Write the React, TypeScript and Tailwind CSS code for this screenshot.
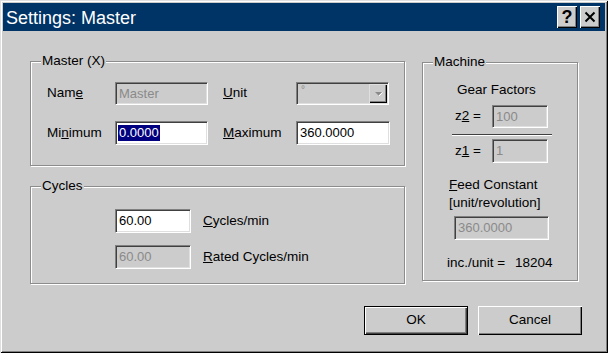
import React from "react";

const font = { fontFamily: '"Liberation Sans", Arial, sans-serif' };

function Field({
  className,
  value,
  disabled,
  selected,
}: {
  className: string;
  value: string;
  disabled?: boolean;
  selected?: boolean;
}) {
  return (
    <div
      className={
        "flex items-center border border-t-[#808080] border-l-[#808080] border-b-white border-r-white shadow-[inset_1px_1px_0_#404040,inset_-1px_-1px_0_#dfdfdf] pl-[2px] leading-[16px] text-[13px] " +
        (disabled ? "bg-[#cccccc] text-[#8a8a8a] " : "bg-white text-black ") +
        className
      }
    >
      {selected ? (
        <span className="bg-[#000080] text-white px-[1px]">{value}</span>
      ) : (
        <span className="px-[1px]">{value}</span>
      )}
    </div>
  );
}

function Group({
  label,
  className,
  children,
}: {
  label: string;
  className: string;
  children?: React.ReactNode;
}) {
  return (
    <div
      className={
        "relative border border-[#8c8c8c] shadow-[1px_1px_0_#ffffff,inset_1px_1px_0_#ffffff] " +
        className
      }
    >
      <div className="absolute left-[10px] top-[-9px] bg-[#cccccc] px-[1px] text-[13.5px] leading-[16px] text-black">
        {label}
      </div>
      {children}
    </div>
  );
}

function Button({
  label,
  isDefault,
}: {
  label: string;
  isDefault?: boolean;
}) {
  return (
    <div
      className={
        "flex w-[104px] h-[29px] items-center justify-center bg-[#cccccc] text-[13.5px] text-black " +
        (isDefault
          ? "border border-black shadow-[inset_1px_1px_0_#ffffff,inset_-1px_-1px_0_#404040,inset_-2px_-2px_0_#808080]"
          : "shadow-[inset_1px_1px_0_#ffffff,inset_-1px_-1px_0_#000000,inset_-2px_-2px_0_#808080]")
      }
    >
      {label}
    </div>
  );
}

export default function App() {
  return (
    <div
      style={font}
      className="w-[608px] h-[353px] bg-[#cccccc] p-[3px] flex flex-col shadow-[inset_1px_1px_0_#dfdfdf,inset_-1px_-1px_0_#000000,inset_2px_2px_0_#ffffff,inset_-2px_-2px_0_#808080] overflow-hidden"
    >
      {/* Title bar */}
      <div className="h-[28px] bg-[#003366] flex items-center pl-[3px] pr-[5px] shrink-0">
        <div className="text-white text-[18px] leading-[20px] flex-1 pt-[1px]">Settings: Master</div>
        <div className="flex gap-[3px]">
          <div className="w-[20px] h-[22px] bg-[#cccccc] flex items-center justify-center shadow-[inset_1px_1px_0_#ffffff,inset_-1px_-1px_0_#000000,inset_-2px_-2px_0_#808080] text-black font-bold text-[18px] leading-[20px]">
            ?
          </div>
          <div className="w-[20px] h-[22px] bg-[#cccccc] flex items-center justify-center shadow-[inset_1px_1px_0_#ffffff,inset_-1px_-1px_0_#000000,inset_-2px_-2px_0_#808080]">
            <svg width="12" height="12" viewBox="0 0 12 12">
              <path d="M1.5 1.5 L10.5 10.5 M10.5 1.5 L1.5 10.5" stroke="#000" strokeWidth="2" />
            </svg>
          </div>
        </div>
      </div>

      {/* Body */}
      <div className="flex flex-col flex-1 text-[13.5px] text-black">
        <div className="flex">
          {/* Left column */}
          <div className="flex flex-col ml-[27px] mt-[30px]">
            <Group label="Master (X)" className="w-[375px] h-[105px]">
              <div className="flex flex-col pt-[20px] pl-[16px]">
                <div className="flex items-center h-[23px]">
                  <div className="w-[68px]">
                    Nam<u>e</u>
                  </div>
                  <Field className="w-[93px] h-[23px]" value="Master" disabled />
                  <div className="w-[73px] ml-[15px]">
                    <u>U</u>nit
                  </div>
                  <div className="relative flex w-[93px] h-[23px] border border-t-[#808080] border-l-[#808080] border-b-white border-r-white shadow-[inset_1px_1px_0_#404040,inset_-1px_-1px_0_#dfdfdf] bg-[#cccccc]">
                    <div className="flex-1 pl-[4px] text-[#8a8a8a] text-[10px] leading-[14px]">°</div>
                    <div className="w-[18px] h-[19px] mt-[1px] mr-[1px] flex items-center justify-center shadow-[inset_1px_1px_0_#dfdfdf,inset_-1px_-1px_0_#000000,inset_-2px_-2px_0_#808080]">
                      <svg width="9" height="6" viewBox="0 0 9 6">
                        <path d="M1 1 L8 1 L4.5 4.5 Z" fill="#8a8a8a" />
                        <path d="M5 5 L8.5 1.5" stroke="#ffffff" strokeWidth="1" />
                      </svg>
                    </div>
                  </div>
                </div>
                <div className="flex items-center h-[24px] mt-[16px]">
                  <div className="w-[68px]">
                    Mi<u>n</u>imum
                  </div>
                  <Field className="w-[93px] h-[24px]" value="0.0000" selected />
                  <div className="w-[73px] ml-[15px]">
                    <u>M</u>aximum
                  </div>
                  <Field className="w-[94px] h-[24px]" value="360.0000" />
                </div>
              </div>
            </Group>

            <Group label="Cycles" className="w-[375px] h-[98px] mt-[20px]">
              <div className="flex flex-col pt-[22px] pl-[84px]">
                <div className="flex items-center h-[24px]">
                  <Field className="w-[76px] h-[24px]" value="60.00" />
                  <div className="ml-[12px]">
                    <u>C</u>ycles/min
                  </div>
                </div>
                <div className="flex items-center h-[24px] mt-[12px]">
                  <Field className="w-[76px] h-[24px]" value="60.00" disabled />
                  <div className="ml-[12px]">
                    <u>R</u>ated Cycles/min
                  </div>
                </div>
              </div>
            </Group>
          </div>

          {/* Right column */}
          <div className="ml-[17px] mt-[31px]">
            <Group label="Machine" className="w-[156px] h-[219px]">
              <div className="flex flex-col">
                <div className="h-[16px] leading-[16px] mt-[19px] pl-[34px]">Gear Factors</div>
                <div className="flex items-center h-[23px] mt-[7px] pl-[32px]">
                  <div className="w-[37px]">
                    z<u>2</u> =
                  </div>
                  <Field className="w-[56px] h-[23px]" value="100" disabled />
                </div>
                <div className="ml-[29px] mt-[6px] w-[100px] h-[2px] border-t border-t-[#404040] border-b border-b-[#ffffff]" />
                <div className="flex items-center h-[24px] mt-[3px] pl-[32px]">
                  <div className="w-[37px]">
                    z<u>1</u> =
                  </div>
                  <Field className="w-[56px] h-[24px]" value="1" disabled />
                </div>
                <div className="mt-[13px] pl-[26px] leading-[18px]">
                  <div>
                    <u>F</u>eed Constant
                  </div>
                  <div>[unit/revolution]</div>
                </div>
                <div className="mt-[4px] pl-[31px]">
                  <Field className="w-[95px] h-[24px]" value="360.0000" disabled />
                </div>
                <div className="flex mt-[15px] pl-[24px] leading-[16px]">
                  <div className="w-[68px]">inc./unit =</div>
                  <div>18204</div>
                </div>
              </div>
            </Group>
          </div>
        </div>

        {/* Buttons */}
        <div className="flex justify-end gap-[10px] pr-[23px] mt-[22px]">
          <Button label="OK" isDefault />
          <Button label="Cancel" />
        </div>
      </div>
    </div>
  );
}
